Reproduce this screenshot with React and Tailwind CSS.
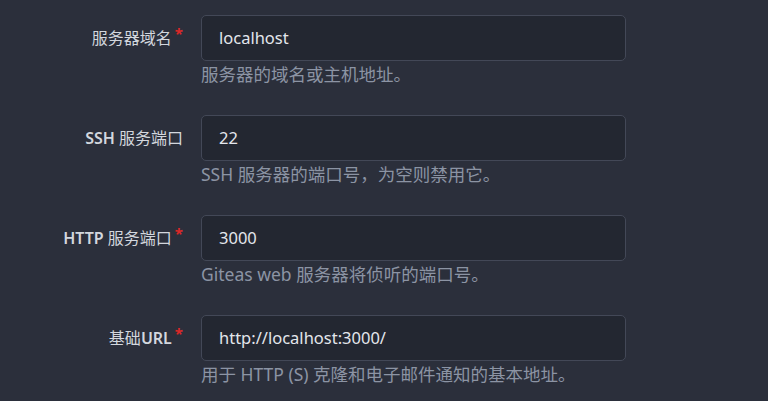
import React from "react";

const rows = [
  { label: [["cjk", "服务器域名"]], req: true, value: "localhost", help: "服务器的域名或主机地址。" },
  { label: [["lat", "SSH"], ["cjk", " 服务端口"]], req: false, value: "22", help: "SSH 服务器的端口号，为空则禁用它。" },
  { label: [["lat", "HTTP"], ["cjk", " 服务端口"]], req: true, value: "3000", help: "Giteas web 服务器将侦听的端口号。" },
  { label: [["cjk", "基础"], ["lat", "URL"]], req: true, value: "http://localhost:3000/", help: "用于 HTTP (S) 克隆和电子邮件通知的基本地址。" },
];

export default function App() {
  return (
    <div
      className="min-h-screen w-full bg-[#2b2f3b] pt-[15px]"
      style={{ fontFamily: '"Noto Sans", "Noto Sans CJK SC", sans-serif' }}
    >
      {rows.map((r, i) => (
        <div key={i} className="flex h-[100px]">
          <div className="flex h-[46px] w-[183px] items-center justify-end text-[16px] text-[#d3d7de]">
            <span>
              {r.label.map(([k, t], j) => (
                <span key={j} className={k === "lat" ? "font-semibold" : "font-normal"}>
                  {t}
                </span>
              ))}
            </span>
            {r.req && (
              <span className="relative -top-[5px] ml-[3px] text-[15px] font-bold text-[#db2828]">*</span>
            )}
          </div>
          <div className="ml-[18px] w-[425px]">
            <div className="flex h-[46px] items-center rounded-[5px] border border-[#434857] bg-[#232731] px-[17px] text-[16.5px] text-[#e3e6ec]">
              {r.value}
            </div>
            <div className="text-[17.5px] leading-[27px] text-[#8c94a4]">{r.help}</div>
          </div>
        </div>
      ))}
    </div>
  );
}
